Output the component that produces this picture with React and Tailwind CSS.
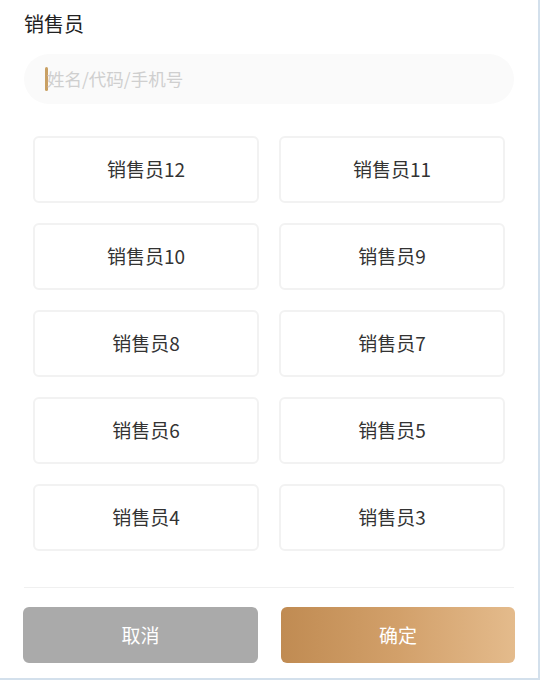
import React from "react";

const names = ["销售员12","销售员11","销售员10","销售员9","销售员8","销售员7","销售员6","销售员5","销售员4","销售员3"];

export default function App() {
  return (
    <div
      className="w-[540px] h-[680px] bg-white border-r-2 border-b-2 border-[#d3e0ec] flex flex-col overflow-hidden"
      style={{ fontFamily: '"Noto Sans CJK SC", "Noto Sans", sans-serif' }}
    >
      <div className="pl-[24px] pt-[9px] h-[30px] text-[20px] leading-[30px] text-[#222]">销售员</div>
      <div className="mx-[24px] mt-[24px] h-[50px] shrink-0 rounded-full bg-[#fafafa] flex items-center pl-[21px]">
        <div className="w-[3px] h-[24px] bg-[#c9a063] rounded-sm"></div>
        <span className="text-[17.5px] text-[#cfcfcf] -ml-[1px]">姓名/代码/手机号</span>
      </div>
      <div className="mx-[33px] mt-[32px] grid grid-cols-2 gap-x-[20px] gap-y-[20px]">
        {names.map((n) => (
          <div
            key={n}
            className="h-[67px] rounded-[6px] border-2 border-[#f2f2f2] bg-white flex items-center justify-center text-[19px] text-[#333]"
          >
            {n}
          </div>
        ))}
      </div>
      <div className="mx-[24px] mt-[36px] h-px shrink-0 bg-[#f0f0f0]"></div>
      <div className="mx-[23px] mt-[19px] flex gap-[23px]">
        <div className="w-[235px] h-[56px] rounded-[6px] bg-[#aaaaaa] flex items-center justify-center text-white text-[19px]">取消</div>
        <div className="w-[234px] h-[56px] rounded-[6px] bg-gradient-to-r from-[#c08b52] via-[#d2a06a] to-[#e4bb8c] flex items-center justify-center text-white text-[19px]">确定</div>
      </div>
    </div>
  );
}
